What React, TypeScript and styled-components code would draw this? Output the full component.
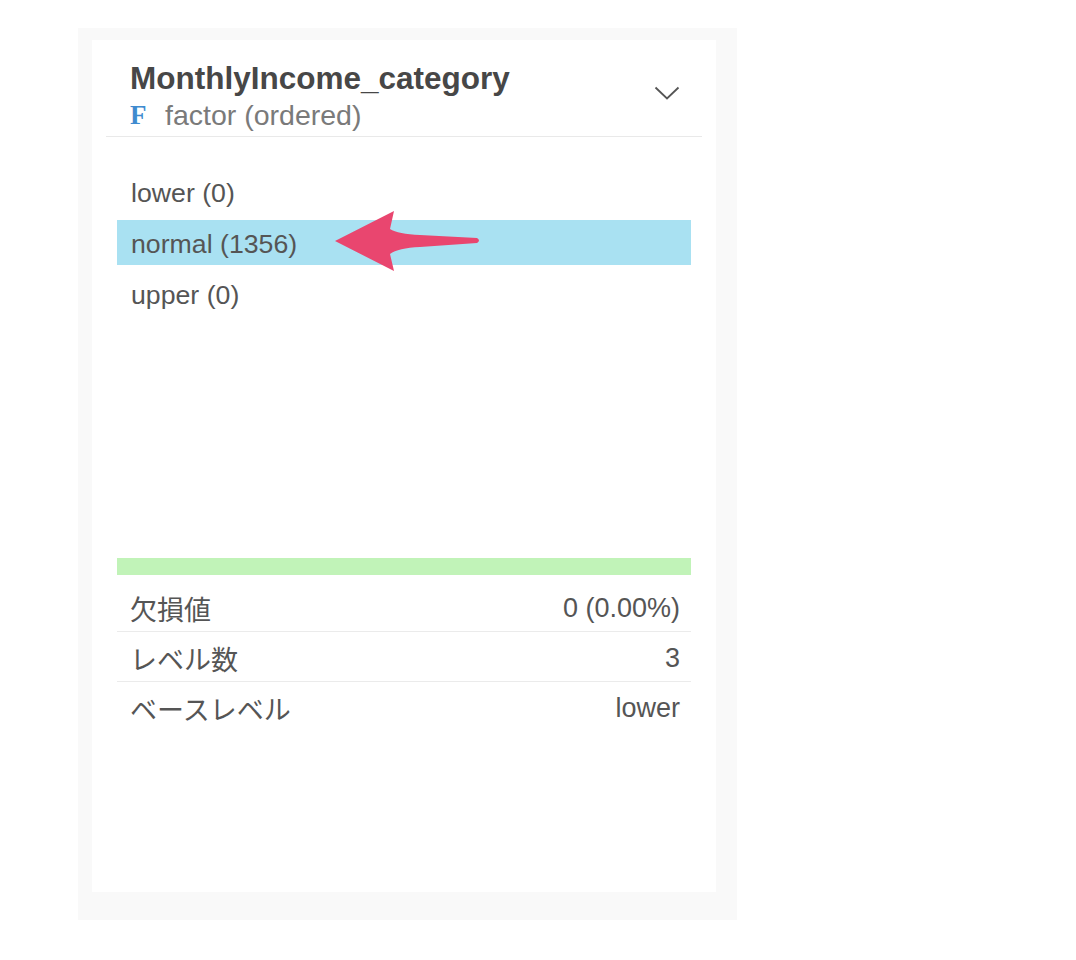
import styled, { createGlobalStyle } from 'styled-components';

const GlobalStyle = createGlobalStyle`
  html, body {
    margin: 0;
    padding: 0;
    background: #fff;
    font-family: "Liberation Sans", Arial, "Noto Sans CJK JP", sans-serif;
  }
`;

const Page = styled.div`
  padding: 28px 0 0 78px;
`;

const Frame = styled.div`
  box-sizing: border-box;
  width: 659px;
  height: 892px;
  background: #f9f9f9;
  padding: 12px 21px 28px 14px;
`;

const Card = styled.div`
  height: 100%;
  background: #fff;
  display: flex;
  flex-direction: column;
`;

const Header = styled.div`
  margin: 0 14px;
  padding: 20px 22px 5px 24px;
  border-bottom: 1px solid #e9e9e9;
  display: flex;
  justify-content: space-between;
  align-items: flex-start;
`;

const Title = styled.div`
  font-size: 31.5px;
  line-height: 36px;
  font-weight: bold;
  color: #474747;
`;

const TypeLine = styled.div`
  margin-top: 3px;
  display: flex;
  align-items: center;
  font-size: 28.5px;
  line-height: 32px;
  color: #7a7a7a;
`;

const TypeIcon = styled.span`
  font-family: "Liberation Serif", "Times New Roman", serif;
  font-weight: bold;
  font-size: 27px;
  color: #3f8bcf;
  width: 35px;
`;

const Chevron = styled.svg`
  margin-top: 26px;
`;

const LevelList = styled.div`
  box-sizing: border-box;
  height: 421px;
  padding: 32px 25px 0;
  display: flex;
  flex-direction: column;
  gap: 6px;
`;

const LevelRow = styled.div<{ $active?: boolean }>`
  position: relative;
  box-sizing: border-box;
  height: 45px;
  padding: 3px 0 0 14px;
  display: flex;
  align-items: center;
  font-size: 26.7px;
  color: #555;
  background: ${(p) => (p.$active ? '#a9e1f2' : 'transparent')};
`;

const Arrow = styled.svg`
  position: absolute;
  left: 213px;
  top: -13px;
`;

const Summary = styled.div`
  padding: 0 25px;
`;

const Bar = styled.div`
  height: 17px;
  background: #c1f3b8;
  margin-bottom: 7px;
`;

const StatRow = styled.div`
  box-sizing: border-box;
  height: 49px;
  padding: 3px 11px 0 13px;
  display: flex;
  justify-content: space-between;
  align-items: center;
  font-size: 27px;
  color: #555;
  & + & {
    height: 50px;
    border-top: 1px solid #ebebeb;
  }
`;

const levels = [
  { label: 'lower (0)' },
  { label: 'normal (1356)', active: true },
  { label: 'upper (0)' },
];

const stats = [
  ['欠損値', '0 (0.00%)'],
  ['レベル数', '3'],
  ['ベースレベル', 'lower'],
];

export default function App() {
  return (
    <>
      <GlobalStyle />
      <Page>
        <Frame>
          <Card>
            <Header>
              <div>
                <Title>MonthlyIncome_category</Title>
                <TypeLine>
                  <TypeIcon>F</TypeIcon>
                  factor (ordered)
                </TypeLine>
              </div>
              <Chevron width="26" height="14" viewBox="0 0 26 14">
                <polyline points="1.5,1.5 13,12.5 24.5,1.5" fill="none" stroke="#555" strokeWidth="1.8" />
              </Chevron>
            </Header>
            <LevelList>
              {levels.map((l) => (
                <LevelRow key={l.label} $active={l.active}>
                  {l.label}
                  {l.active && (
                    <Arrow width="155" height="70" viewBox="0 0 155 70">
                      <path
                        d="M5 34 L64 4 L60 22 Q68 27 90 28 L147 31 Q151 33.5 147 36 L90 40 Q68 41 60 47 L64 64 Z"
                        fill="#e9466f"
                      />
                    </Arrow>
                  )}
                </LevelRow>
              ))}
            </LevelList>
            <Summary>
              <Bar />
              {stats.map(([k, v]) => (
                <StatRow key={k}>
                  <span>{k}</span>
                  <span>{v}</span>
                </StatRow>
              ))}
            </Summary>
          </Card>
        </Frame>
      </Page>
    </>
  );
}
